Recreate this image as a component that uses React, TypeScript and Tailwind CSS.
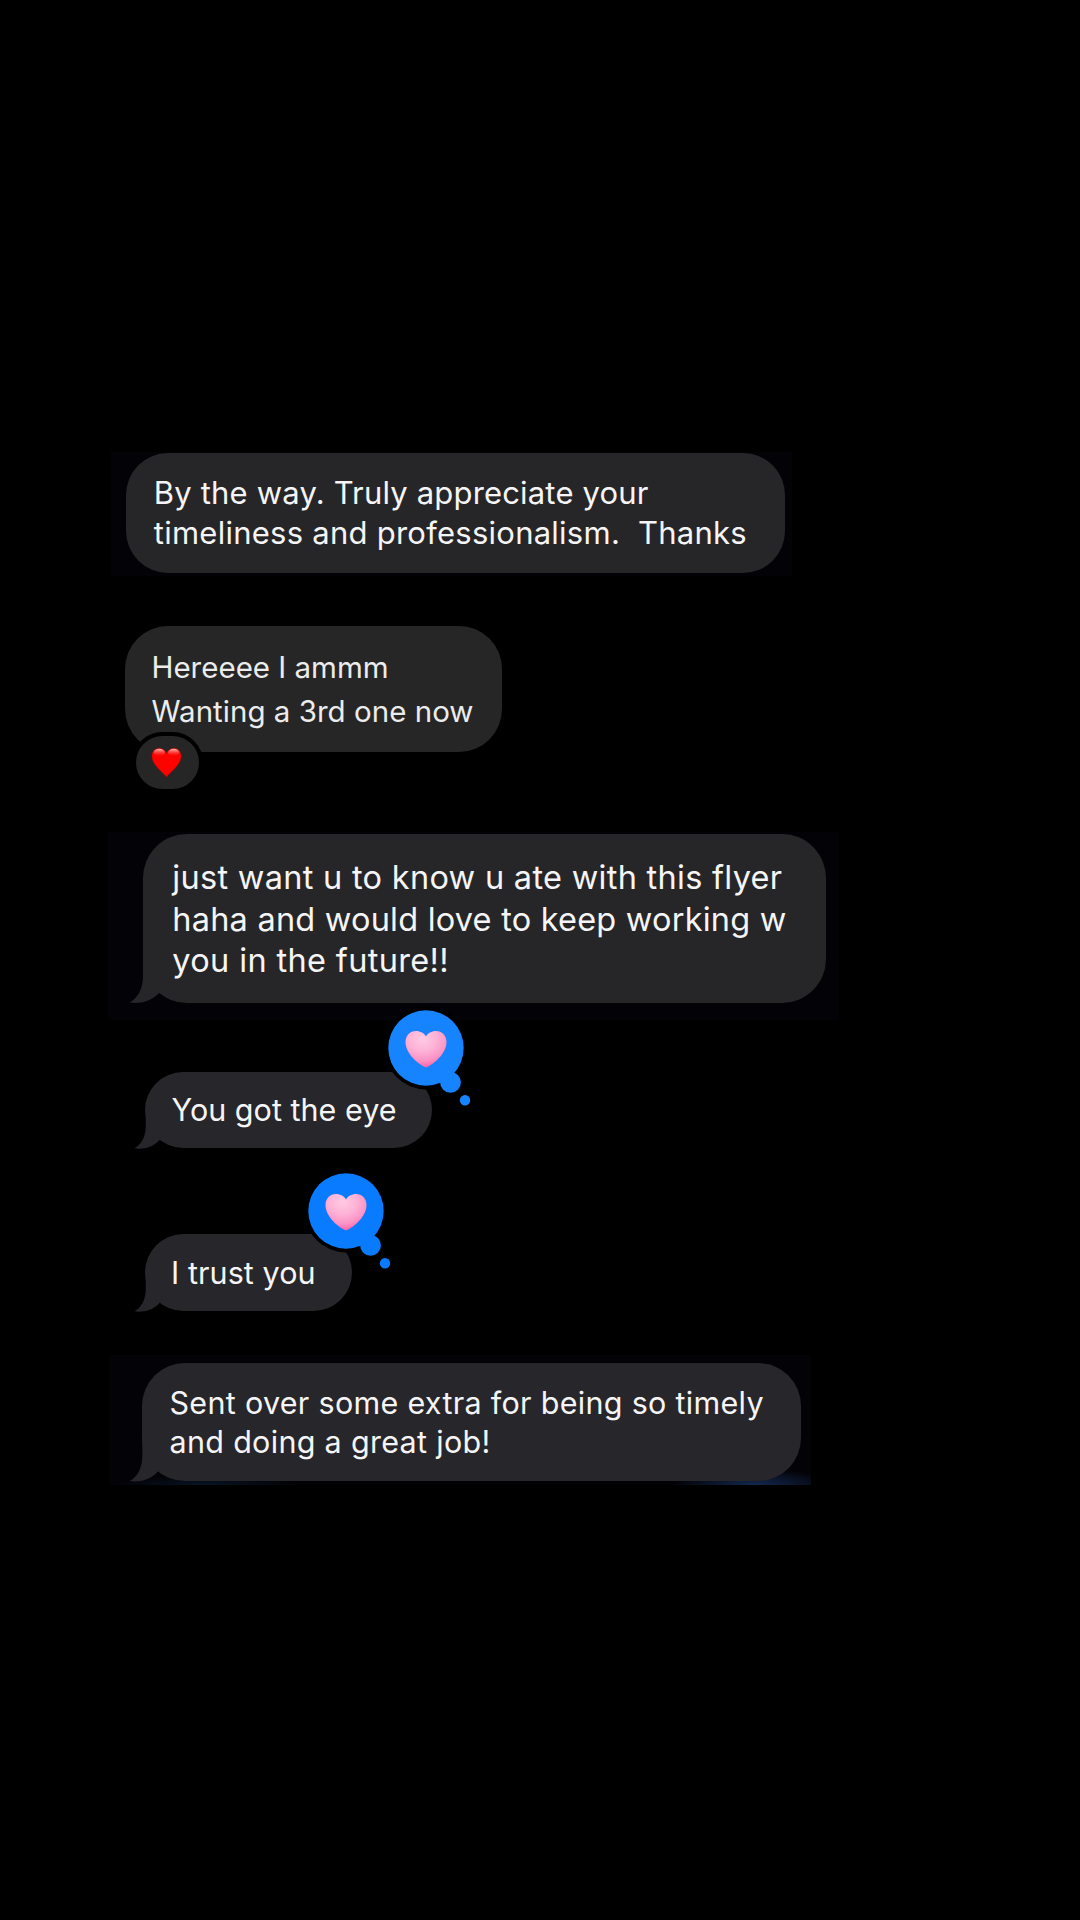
import { clsx } from "clsx";

type TailProps = {
  className: string;
};

const Tail = ({ className }: TailProps) => {
  return (
    <svg viewBox="-14 -46 40 47" className={clsx("absolute", className)}>
      <path
        d="M0 -46V-27C0 -14 -5.500 -4.500 -13.500 -0.500C-4 1.200 8 -1.500 15.500 -9.500L26 -20V-46Z"
        fill="currentColor"
      />
    </svg>
  );
};

const RedHeart = () => {
  return (
    <svg viewBox="0 0 32 31" className="h-[31px] w-[31px]">
      <defs>
        <linearGradient id="red-gloss" x1="0" y1="0" x2="0" y2="1">
          <stop offset="0" stopColor="#ffc4c0" stopOpacity="0.95" />
          <stop offset="1" stopColor="#ff3a34" stopOpacity="0" />
        </linearGradient>
      </defs>
      <path
        d="M16 30.500C12.500 25.500 1 18.500 1 8.800C1 4 4.300 0.800 8.300 0.800C12 0.800 14.800 3 16 6.200C17.200 3 20 0.800 23.700 0.800C27.700 0.800 31 4 31 8.800C31 18.500 19.500 25.500 16 30.500Z"
        fill="#fd0300"
        stroke="#b80805"
        strokeWidth="0.5"
      />
      <ellipse cx="8.500" cy="5.200" rx="5.800" ry="3.800" fill="url(#red-gloss)" />
      <ellipse cx="23.500" cy="5.200" rx="5.800" ry="3.800" fill="url(#red-gloss)" />
    </svg>
  );
};

const PinkHeart = () => {
  return (
    <svg viewBox="0 0 42 38" className="h-[38px] w-[42px]">
      <defs>
        <radialGradient id="pink-fill" cx="0.42" cy="0.22" r="0.85">
          <stop offset="0" stopColor="#ffcbe2" />
          <stop offset="0.4" stopColor="#fdb2d6" />
          <stop offset="0.7" stopColor="#fc93c6" />
          <stop offset="1" stopColor="#f9559f" />
        </radialGradient>
      </defs>
      <path
        d="M21 37.300C18.500 37.300 0.500 26 0.500 12C0.500 5.500 5 1 11 1C15.500 1 19.200 3.300 21 6.500C22.800 3.300 26.500 1 31 1C37 1 41.500 5.500 41.500 12C41.500 26 23.500 37.300 21 37.300Z"
        fill="url(#pink-fill)"
      />
    </svg>
  );
};

type ReactionProps = {
  className: string;
};

const Reaction = ({ className }: ReactionProps) => {
  return (
    <div className={clsx("absolute size-[76px]", className)}>
      {/* bubble trail */}
      <svg
        viewBox="0 0 92 92"
        className="absolute -top-2 -left-2 size-[92px] overflow-visible"
      >
        <circle cx="46" cy="46" r="41.500" fill="#000" />
        <circle cx="46" cy="46" r="37.700" fill="currentColor" />
        <circle cx="70.500" cy="80.300" r="10.400" fill="currentColor" />
        <circle cx="85" cy="98.300" r="5.200" fill="currentColor" />
      </svg>
      <div className="relative flex size-full items-center justify-center pt-0.5">
        <PinkHeart />
      </div>
    </div>
  );
};

const App = () => {
  return (
    <main className="flex h-[1920px] w-[1080px] flex-col items-start overflow-hidden bg-black pt-[452px] font-['Inter',sans-serif] text-[#f5f5f7] whitespace-pre">
      {/* professionalism */}
      <section className="ml-[111px] h-[124px] w-[681px] bg-[#030307] pt-px pl-[14.500px]">
        <div className="h-[120px] w-[659px] rounded-[42px] bg-[#262628] pt-5 pl-[28.300px] text-[31px] leading-[39.5px]">
          <p className="tracking-[0.176px]">By the way. Truly appreciate your</p>
          <p className="tracking-[0.250px]">
            {"timeliness and professionalism.  Thanks"}
          </p>
        </div>
      </section>

      {/* third one */}
      <section className="mt-[50px] ml-[125px]">
        <div className="relative h-[126px] w-[376.5px] rounded-[43px] bg-[#262626] pt-5 pl-[26.500px] text-[29.5px] leading-[43.8px] text-[#ececec]">
          <p>Hereeee I ammm</p>
          <p className="tracking-[0.020px]">Wanting a 3rd one now</p>
          <div className="absolute top-[106px] left-[6.500px] flex h-[61px] w-[71.500px] items-center justify-center rounded-[30.500px] border-[4.500px] border-black bg-[#262626] pr-px">
            <RedHeart />
          </div>
        </div>
      </section>

      {/* flyer */}
      <section className="mt-20 ml-[108px] h-[188px] w-[731px] bg-[#030307] pt-[2px] pl-[35px]">
        <div className="relative h-[168.500px] w-[682.500px] rounded-[44px] bg-[#262628] pt-[23px] pl-[29.300px] text-[32.500px] leading-[41.650px]">
          <Tail className="-bottom-px -left-3.5 h-[47px] w-10 text-[#262628]" />
          <p className="relative tracking-[0.290px]">
            just want u to know u ate with this flyer
          </p>
          <p className="relative tracking-[0.210px]">
            haha and would love to keep working w
          </p>
          <p className="relative tracking-[0.349px]">you in the future!!</p>
        </div>
      </section>

      {/* the eye */}
      <section className="mt-[51.500px] ml-[145px]">
        <div className="relative h-[76.500px] w-[287px] rounded-full bg-[#27262a] pt-[18.700px] pl-[26.500px] text-[30.500px] leading-10">
          <Tail className="-bottom-px left-[-11.500px] h-[39.500px] w-[33.600px] text-[#27262a]" />
          <p className="relative tracking-[0.020px]">You got the eye</p>
          <Reaction className="top-[-61.800px] left-[243px] text-[#1684ff]" />
        </div>
      </section>

      {/* trust */}
      <section className="mt-[86px] ml-[145px]">
        <div className="relative h-[77px] w-[206.500px] rounded-full bg-[#27262a] pt-[19px] pl-[26px] text-[30.500px] leading-10">
          <Tail className="-bottom-px left-[-11.500px] h-[39.500px] w-[33.600px] text-[#27262a]" />
          <p className="relative tracking-[0.085px]">I trust you</p>
          <Reaction className="top-[-61.200px] left-[163px] text-[#097bff]" />
        </div>
      </section>

      {/* great job */}
      <section className="mt-11 ml-[109px] h-[130px] w-[702px] bg-[#030307] bg-[radial-gradient(ellipse_80px_16px_at_645px_130px,#12284f,transparent),radial-gradient(ellipse_90px_9px_at_95px_130px,#081426,transparent)] pt-[7.500px] pl-[33px]">
        <div className="relative h-[118.500px] w-[659px] rounded-[43px] bg-[#27262a] pt-[21.500px] pl-[27.500px] text-[30.500px] leading-[38.700px]">
          <Tail className="-bottom-px -left-[13px] h-[44.500px] w-[38px] text-[#27262a]" />
          <p className="relative tracking-[0.300px]">
            Sent over some extra for being so timely
          </p>
          <p className="relative tracking-[0.307px]">and doing a great job!</p>
        </div>
      </section>
    </main>
  );
};

export default App;
